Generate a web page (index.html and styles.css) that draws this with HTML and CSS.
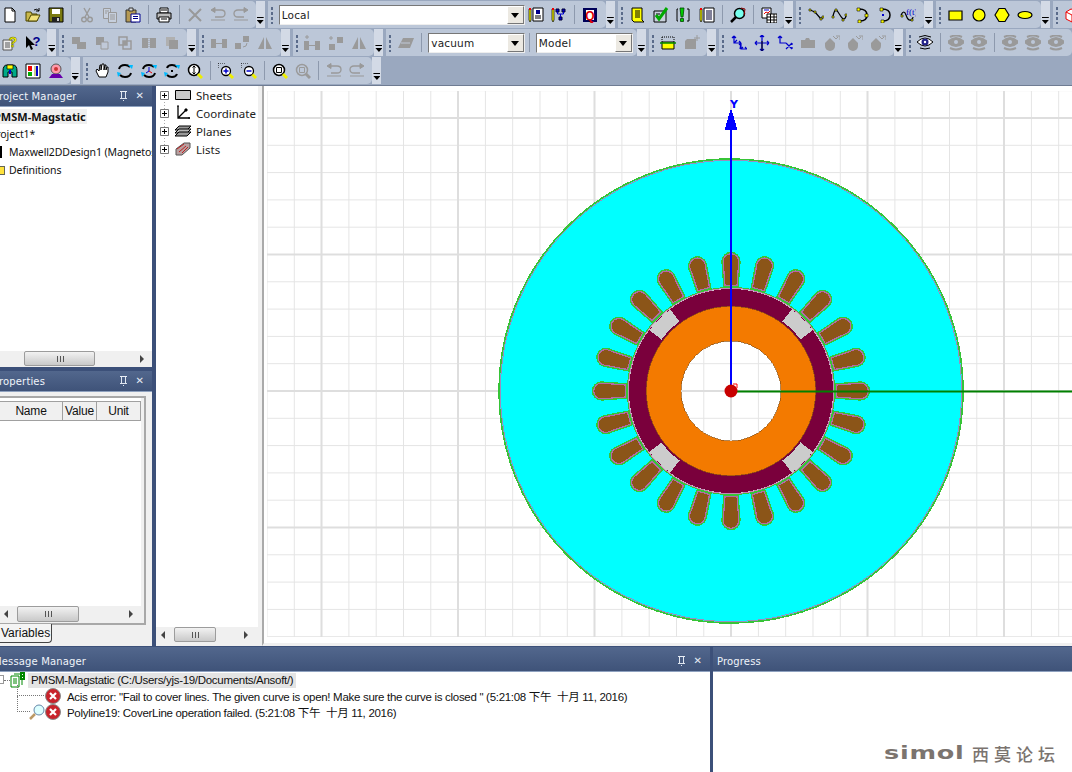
FILE: index.html
```html
<!DOCTYPE html>
<html lang="en">
<head>
<meta charset="utf-8">
<title>Maxwell</title>
<link rel="stylesheet" href="styles.css">
</head>
<body>
<svg class="defs" aria-hidden="true">
<defs>
<symbol id="new" viewBox="0 0 16 16"><path d="M3 1h7l3 3v11H3z" fill="#fff" stroke="#000"/><path d="M10 1v3h3" fill="none" stroke="#000"/></symbol>
<symbol id="open" viewBox="0 0 16 16"><path d="M1 5h5l1 2h5v7H1z" fill="#c9b84a" stroke="#4a4500"/><path d="M3 14l3-6h9l-3 6z" fill="#f2e27a" stroke="#4a4500"/><path d="M9 3q3-2 5 1M14 1v3h-3" fill="none" stroke="#000"/></symbol>
<symbol id="save" viewBox="0 0 16 16"><path d="M1 1h14v14H1z" fill="#7a7a10" stroke="#000"/><path d="M4 2h8v5H4z" fill="#fff"/><path d="M4 10h8v5H4z" fill="#222"/><path d="M9 11h2v3H9z" fill="#ccc"/></symbol>
<symbol id="cut" viewBox="0 0 16 16"><path d="M5 1l5 9M11 1L6 10" stroke="#999" fill="none" stroke-width="1.4"/><circle cx="5" cy="12.5" r="2.3" fill="none" stroke="#999" stroke-width="1.4"/><circle cx="11" cy="12.5" r="2.3" fill="none" stroke="#999" stroke-width="1.4"/></symbol>
<symbol id="copy" viewBox="0 0 16 16"><path d="M1.5 1.5h7v10h-7z" fill="#c6cfdd" stroke="#999"/><path d="M6.5 5.5h8v10h-8z" fill="#c6cfdd" stroke="#999"/><path d="M8 8h5M8 10h5M8 12h5M3 4h4M3 6h2" stroke="#999"/></symbol>
<symbol id="paste" viewBox="0 0 16 16"><path d="M1 3h10v12H1z" fill="#b59a55" stroke="#333"/><path d="M4 1h4v3H4z" fill="#ddd" stroke="#333"/><path d="M6 7h9v8H6z" fill="#fff" stroke="#00008b"/><path d="M8 9.5h5M8 11.5h5" stroke="#00008b"/></symbol>
<symbol id="print" viewBox="0 0 16 16"><path d="M4 1h8v5H4z" fill="#fff" stroke="#000"/><path d="M1 6h14v6H1z" fill="#bbb" stroke="#000"/><path d="M3 10h10v5H3z" fill="#fff" stroke="#000"/><path d="M5 3h6M5 12h6" stroke="#000"/></symbol>
<symbol id="del" viewBox="0 0 16 16"><path d="M2 2l12 12M14 2L2 14" stroke="#999" stroke-width="2"/></symbol>
<symbol id="undo" viewBox="0 0 16 16"><path d="M5 3h6q4 0 4 3.500t-4 3.500H5" fill="none" stroke="#999" stroke-width="1.300"/><path d="M1 3l4-2.500v5z M1 13h14" fill="#999" stroke="#999"/></symbol>
<symbol id="redo" viewBox="0 0 16 16"><path d="M11 3H5Q1 3 1 6.500T5 10h6" fill="none" stroke="#999" stroke-width="1.300"/><path d="M15 3l-4-2.500v5z M1 13h14" fill="#999" stroke="#999"/></symbol>
<symbol id="pdoc" viewBox="0 0 16 16"><path d="M5 1h10v13H5z" fill="#fff" stroke="#000"/><path d="M8 3h4v4H8z" fill="#00008b"/><path d="M7 9h6M7 11h6" stroke="#000"/><path d="M1 2h2v11l-1 2-1-2z" fill="#ff0" stroke="#000" stroke-width=".7"/><path d="M1 1h2v2H1z" fill="#e00"/></symbol>
<symbol id="ptree" viewBox="0 0 16 16"><path d="M1 2h2v11l-1 2-1-2z" fill="#ff0" stroke="#000" stroke-width=".7"/><path d="M1 1h2v2H1z" fill="#e00"/><path d="M5 2h3v3H5zM11 2h3v3h-3zM8 10h3v3H8z" fill="#00c" stroke="#003"/><path d="M6.500 5v2h6V5M9.500 7v3" fill="none" stroke="#00c"/></symbol>
<symbol id="q" viewBox="0 0 16 16"><path d="M1 1h14v14H1z" fill="#000058"/><path d="M4 3h8v10H4z" fill="#fff"/><text x="8" y="12.500" font-size="12" font-weight="700" text-anchor="middle" font-family="Liberation Sans" fill="#d00">Q</text></symbol>
<symbol id="note" viewBox="0 0 16 16"><path d="M3 1h10v12l2 2H5l-2-2z" fill="#ff0" stroke="#000"/><path d="M6 4h5M6 6h5M6 8h5M6 10h5" stroke="#000"/></symbol>
<symbol id="check" viewBox="0 0 16 16"><path d="M1 4h12v11H1z" fill="#c8d0dc" stroke="#000"/><path d="M3 7h4M3 10h4" stroke="#000"/><path d="M3 8l3 4 8-11" fill="none" stroke="#0a0" stroke-width="3"/></symbol>
<symbol id="excl" viewBox="0 0 16 16"><path d="M4 1h4l-1 9H5z" fill="#0c0" stroke="#040" stroke-width=".8"/><path d="M4.500 11.500h3v3h-3z" fill="#0c0" stroke="#040" stroke-width=".8"/><path d="M2 2H1v12h1M11 2h2v12h-2" fill="none" stroke="#000"/></symbol>
<symbol id="pdoc2" viewBox="0 0 16 16"><path d="M5 1h10v14H5z" fill="#fff" stroke="#000"/><path d="M7 4h6M7 6h6M7 8h6M7 10h6M7 12h6" stroke="#003"/><path d="M1 2h2v11l-1 2-1-2z" fill="#ff0" stroke="#000" stroke-width=".7"/><path d="M1 1h2v2H1z" fill="#e00"/></symbol>
<symbol id="mag" viewBox="0 0 16 16"><circle cx="9.500" cy="6.500" r="5" fill="#7fe" stroke="#000" stroke-width="1.500"/><path d="M6 10l-5 5" stroke="#000" stroke-width="2.500"/><path d="M11 1l4 1-1 6" fill="none" stroke="#800"/></symbol>
<symbol id="table" viewBox="0 0 16 16"><path d="M1 1h9v10H1z" fill="#fff" stroke="#000"/><path d="M3 7l2-2 2 1 2-2" fill="none" stroke="#e00"/><path d="M3 3h5" stroke="#00c"/><path d="M6 7h10v9H6z" fill="#fff" stroke="#000"/><path d="M6 10h10M6 13h10M9.500 7v9M13 7v9" stroke="#000"/></symbol>
<symbol id="line" viewBox="0 0 16 16"><path d="M2 3l5 2 6 7 2-2" fill="none" stroke="#000" stroke-width="1.200"/><path d="M1 2h2v2H1zM6 4h2v2H6zM12 11h2v2h-2zM14 9h2v2h-2z" fill="#ff0" stroke="#000" stroke-width=".6"/></symbol>
<symbol id="spline" viewBox="0 0 16 16"><path d="M2 9q2-9 5-4t5 7q3 0 3-4" fill="none" stroke="#000" stroke-width="1.200"/><path d="M1 9h2v2H1zM4 2h2v2H4zM11 12h2v2h-2zM14 7h2v2h-2z" fill="#ff0" stroke="#000" stroke-width=".6"/></symbol>
<symbol id="arc" viewBox="0 0 16 16"><path d="M5 2q8 0 8 6t-7 6" fill="none" stroke="#000" stroke-width="1.500"/><path d="M3 1h3v3H3zM11 7h3v3h-3zM4 13h3v3H4z" fill="#ff0" stroke="#000" stroke-width=".6"/></symbol>
<symbol id="arc2" viewBox="0 0 16 16"><path d="M5 2q8 0 8 6t-7 6" fill="none" stroke="#000" stroke-width="1.500"/><path d="M3 1h3v3H3zM4 13h3v3H4z" fill="#ff0" stroke="#000" stroke-width=".6"/><path d="M5 7h2v2H5z" fill="#00c"/></symbol>
<symbol id="fx" viewBox="0 0 16 16"><path d="M1 8q3-6 5 0t5 5q2-1 2-3" fill="none" stroke="#000" stroke-width="1.200"/><path d="M1 8h2v2H1zM11 12h2v2h-2z" fill="#ff0" stroke="#000" stroke-width=".6"/><text x="6" y="8" font-size="9" fill="#00c" font-family="Liberation Serif">f(t)</text></symbol>
<symbol id="srect" viewBox="0 0 16 16"><path d="M1 4h13v9H1z" fill="#ff0" stroke="#000" stroke-width="1.200"/></symbol>
<symbol id="scirc" viewBox="0 0 16 16"><circle cx="8" cy="8" r="6" fill="#ff0" stroke="#000" stroke-width="1.200"/></symbol>
<symbol id="shex" viewBox="0 0 16 16"><path d="M5 1.500h6l4 6.500-4 6.500H5L1 8z" fill="#ff0" stroke="#000" stroke-width="1.200"/></symbol>
<symbol id="sell" viewBox="0 0 16 16"><ellipse cx="8" cy="8" rx="7" ry="3.500" fill="#ff0" stroke="#000" stroke-width="1.200"/></symbol>
<symbol id="rbox" viewBox="0 0 16 16"><path d="M2 5l5-3 7 2v8l-6 3-6-3z" fill="#fff" stroke="#e00"/><path d="M2 5l6 3 6-4M8 8v7" fill="none" stroke="#e00"/></symbol>
<symbol id="dochelp" viewBox="0 0 16 16"><path d="M1 5h9v10H1z" fill="#eee" stroke="#555"/><path d="M3 8h5M3 10h5M3 12h5" stroke="#555"/><text x="11" y="12" font-size="14" font-weight="700" text-anchor="middle" font-family="Liberation Sans" fill="#ff0" stroke="#660" stroke-width=".5">?</text></symbol>
<symbol id="arrhelp" viewBox="0 0 16 16"><path d="M1 1v12l3-3 2 5 2-1-2-4h4z" fill="#000"/><text x="11.500" y="11" font-size="13" font-weight="700" text-anchor="middle" font-family="Liberation Sans" fill="#00008b">?</text></symbol>
<symbol id="g1" viewBox="0 0 16 16"><path d="M1 2h8v7H1zM6 7h9v7H6z" fill="#9a9a9a"/></symbol>
<symbol id="g2" viewBox="0 0 16 16"><path d="M2 2h8v8H2z" fill="#9a9a9a"/><path d="M7 7h7v7H7z" fill="#c0c9d8" stroke="#9a9a9a"/></symbol>
<symbol id="g3" viewBox="0 0 16 16"><path d="M2 2h8v8H2zM6 6h8v8H6z" fill="none" stroke="#9a9a9a" stroke-width="1.500"/><path d="M6 6h4v4H6z" fill="#9a9a9a"/></symbol>
<symbol id="g4" viewBox="0 0 16 16"><path d="M1 3h6v10H1zM9 3h6v10H9z" fill="#9a9a9a"/><path d="M8 3v10" stroke="#9a9a9a" stroke-dasharray="1 1"/></symbol>
<symbol id="g5" viewBox="0 0 16 16"><path d="M2 2h9v9H2z" fill="#b0b0b0"/><path d="M5 5h9v9H5z" fill="#9a9a9a"/></symbol>
<symbol id="m1" viewBox="0 0 16 16"><path d="M0 4h5v9H0zM11 4h5v9h-5z" fill="#9a9a9a"/><path d="M5 8.500h6" stroke="#9a9a9a"/></symbol>
<symbol id="m2" viewBox="0 0 16 16"><path d="M1 8h6v6H1zM9 1h6v6H9z" fill="#9a9a9a"/><path d="M13 8q0 4-4 4" fill="none" stroke="#9a9a9a"/></symbol>
<symbol id="m3" viewBox="0 0 16 16"><path d="M7 2v12H1zM9 2v12h6z" fill="#9a9a9a"/></symbol>
<symbol id="m4" viewBox="0 0 16 16"><path d="M0 6h5v9H0zM11 6h5v9h-5z" fill="#9a9a9a"/><path d="M5 10.500h6M3 0v4M1 2h4" stroke="#9a9a9a"/></symbol>
<symbol id="m5" viewBox="0 0 16 16"><path d="M1 9h6v6H1zM9 2h6v6H9z" fill="#9a9a9a"/><path d="M3 1v4M1 3h4" stroke="#9a9a9a"/></symbol>
<symbol id="sheetg" viewBox="0 0 16 16"><path d="M5 3h11l-4 10H0z" fill="#9a9a9a"/><path d="M3 8h9" stroke="#c0c9d8"/></symbol>
<symbol id="lay1" viewBox="0 0 16 16"><path d="M2 2h12M2 2v6M14 2v6" stroke="#000" stroke-dasharray="1 1" fill="none"/><path d="M2 7h12v7H2z" fill="#ff0" stroke="#000"/><path d="M0 8h16" stroke="#080" stroke-width="1.500"/></symbol>
<symbol id="lay2" viewBox="0 0 16 16"><path d="M1 6l2-2h9v10H1z" fill="#9a9a9a"/><path d="M13 0v6M10 3h6" stroke="#9a9a9a"/></symbol>
<symbol id="ba1" viewBox="0 0 16 16"><path d="M3 1v7h7M10 8v6h6M3 1L1 3M3 1l2 2M10 8l-2-2M10 8l-2 2M10 14l2-2M16 14l-2-2M10 8l-1 6M3 8l3-3" fill="none" stroke="#00c" stroke-width="1.200"/></symbol>
<symbol id="ba2" viewBox="0 0 16 16"><path d="M8 0v16M1 8h14M8 0L6 2M8 0l2 2M1 8l2-2M1 8l2 2M15 8l-2-2M15 8l-2 2M8 16l-2-2M8 16l2-2" fill="none" stroke="#00c" stroke-width="1.200"/><path d="M8 6v10" stroke="#000"/></symbol>
<symbol id="ba3" viewBox="0 0 16 16"><path d="M3 1v7h6M9 8l6 6M9 14l6-6M3 1L1 3M3 1l2 2M15 8v2M15 14v-2" fill="none" stroke="#00c" stroke-width="1.200"/></symbol>
<symbol id="gbox" viewBox="0 0 16 16"><path d="M1 5h4l1-2h3l1 2h5v8H1z" fill="#9a9a9a"/></symbol>
<symbol id="gdrop" viewBox="0 0 16 16"><path d="M6 3l5 5v3a5 5 0 1 1-10 0V8z" fill="#9a9a9a"/><path d="M9 1l3 3M12 1h4v4M12 4l2-2" fill="none" stroke="#9a9a9a"/></symbol>
<symbol id="eye" viewBox="0 0 16 16"><path d="M0 7q8-8 16 0-8 8-16 0z" fill="#fff" stroke="#000"/><circle cx="8" cy="7" r="3.500" fill="#228"/><circle cx="8" cy="7" r="1.200" fill="#fff"/><path d="M2 2q6-3 12 0M3 13q5 2 10 0" fill="none" stroke="#000"/></symbol>
<symbol id="geye" viewBox="0 0 16 16"><path d="M0 7q8-8 16 0-8 8-16 0z" fill="#9a9a9a" stroke="#9a9a9a" stroke-width="2"/><circle cx="8" cy="7" r="2" fill="#bcc7d8"/><path d="M2 2q6-3 12 0M2 13q6 3 12 0" fill="none" stroke="#9a9a9a" stroke-width="2"/></symbol>
<symbol id="binoc" viewBox="0 0 16 16"><path d="M1 8q0-6 4-6h6q4 0 4 6v6h-5V9H6v5H1z" fill="#0a8" stroke="#000"/><path d="M5 2h6v4H5z" fill="#ff0" stroke="#000" stroke-width=".7"/><path d="M7 7h2v4H7z" fill="#00c"/></symbol>
<symbol id="bars" viewBox="0 0 16 16"><path d="M1 1h14v14H1z" fill="#fff" stroke="#000"/><path d="M3 3h4v5H3z" fill="#e00"/><path d="M3 9h4v4H3z" fill="#0a0"/><path d="M9 3h4v10H9z" fill="#cc8"/><path d="M11 3h2v10h-2z" fill="#00c"/></symbol>
<symbol id="target" viewBox="0 0 16 16"><circle cx="8" cy="6" r="5" fill="#f9a" stroke="#555"/><circle cx="8" cy="6" r="2" fill="#c33"/><path d="M1 15l3-4h8l3 4z" fill="#60a"/></symbol>
<symbol id="hand" viewBox="0 0 16 16"><path d="M2 8l3 6h7l2-5V4l-1 0-1 3V2h-1l-1 5V1H8L7 7V2H6L5 8 3 6z" fill="#fff" stroke="#000"/></symbol>
<symbol id="rot" viewBox="0 0 16 16"><path d="M2 6q1-4 6-4 3 0 5 2M14 10q-1 4-6 4-3 0-5-2" fill="none" stroke="#000" stroke-width="2"/><path d="M11 2l5 0-1 4zM0 9l4 1-3 4z" fill="#0bf"/></symbol>
<symbol id="rotx" viewBox="0 0 16 16"><path d="M2 6q1-4 6-4 3 0 5 2M14 10q-1 4-6 4-3 0-5-2" fill="none" stroke="#000" stroke-width="2"/><path d="M11 2l5 0-1 4zM0 9l4 1-3 4z" fill="#0bf"/><path d="M8 8V4M8 8l-3 2" stroke="#00c"/><path d="M8 8l3 2" stroke="#e00"/></symbol>
<symbol id="rotz" viewBox="0 0 16 16"><path d="M3 5q1-3 5-3 3 0 5 2M13 11q-1 3-5 3-3 0-5-2" fill="none" stroke="#000" stroke-width="2"/><path d="M11 2l5 0-1 4zM0 9l4 1-3 4z" fill="#0bf"/><path d="M7 7h2v2H7z" fill="#000"/></symbol>
<symbol id="zfit" viewBox="0 0 16 16"><circle cx="7" cy="7" r="5.500" fill="#fff" stroke="#000" stroke-width="1.500"/><path d="M7 3v8M5.500 4.500L7 3l1.500 1.500M5.500 9.500L7 11l1.500-1.500" fill="none" stroke="#000"/><path d="M11 11l4 4" stroke="#ee0" stroke-width="3"/></symbol>
<symbol id="zin" viewBox="0 0 16 16"><path d="M0 0h8M0 0v6" stroke="#000" stroke-dasharray="1 1" fill="none"/><circle cx="8" cy="8" r="4.500" fill="#fff" stroke="#000" stroke-width="1.300"/><path d="M5.500 8h5M8 5.500v5" stroke="#00c" stroke-width="1.500"/><path d="M11.500 11.500l3.500 3.500" stroke="#ee0" stroke-width="3"/></symbol>
<symbol id="zout" viewBox="0 0 16 16"><path d="M0 0h8M0 0v6" stroke="#000" stroke-dasharray="1 1" fill="none"/><circle cx="8" cy="8" r="4.500" fill="#fff" stroke="#000" stroke-width="1.300"/><path d="M5.500 8h5" stroke="#00c" stroke-width="1.500"/><path d="M11.500 11.500l3.500 3.500" stroke="#ee0" stroke-width="3"/></symbol>
<symbol id="zbox" viewBox="0 0 16 16"><circle cx="7" cy="7" r="5.500" fill="#fff" stroke="#000" stroke-width="1.500"/><path d="M4.500 4.500h5v5h-5z" fill="none" stroke="#000"/><path d="M11 11l4 4" stroke="#ee0" stroke-width="3"/></symbol>
<symbol id="zgrey" viewBox="0 0 16 16"><circle cx="7" cy="7" r="5.500" fill="none" stroke="#9a9a9a" stroke-width="1.500"/><path d="M4.500 4.500h5v5h-5z" fill="none" stroke="#9a9a9a"/><path d="M11 11l4 4" stroke="#9a9a9a" stroke-width="3"/></symbol>
<symbol id="err" viewBox="0 0 16 16"><circle cx="8" cy="8" r="7.500" fill="#c8242c" stroke="#8a8a8a"/><path d="M5 5l6 6M11 5l-6 6" stroke="#fff" stroke-width="2.200"/></symbol>
<symbol id="plus" viewBox="0 0 9 9"><path d="M.5.500h8v8h-8z" fill="#fff" stroke="#777"/><path d="M2 4.500h5M4.500 2v5" stroke="#000"/></symbol>
</defs>
</svg>

<div class="app">
<header class="bars">
  <div class="row">
    <div class="tb first"><div class="pill">
      <svg class="ic"><use href="#new"/></svg><svg class="ic"><use href="#open"/></svg><svg class="ic"><use href="#save"/></svg><i class="sep"></i>
      <svg class="ic"><use href="#cut"/></svg><svg class="ic"><use href="#copy"/></svg><svg class="ic"><use href="#paste"/></svg><i class="sep"></i>
      <svg class="ic"><use href="#print"/></svg><i class="sep"></i>
      <svg class="ic"><use href="#del"/></svg><svg class="ic"><use href="#undo"/></svg><svg class="ic"><use href="#redo"/></svg>
    </div><div class="chev"></div></div>
    <div class="tb"><div class="pill"><i class="grip"></i>
      <div class="combo wide"><span>Local</span><b></b></div>
      <svg class="ic"><use href="#pdoc"/></svg><svg class="ic"><use href="#ptree"/></svg><i class="sep"></i><svg class="ic"><use href="#q"/></svg>
    </div><div class="chev"></div></div>
    <div class="tb"><div class="pill"><i class="grip"></i>
      <svg class="ic"><use href="#note"/></svg><svg class="ic"><use href="#check"/></svg><svg class="ic"><use href="#excl"/></svg><svg class="ic"><use href="#pdoc2"/></svg><i class="sep"></i>
      <svg class="ic"><use href="#mag"/></svg><i class="sep"></i><svg class="ic"><use href="#table"/></svg>
    </div><div class="chev"></div></div>
    <div class="tb"><div class="pill"><i class="grip"></i>
      <svg class="ic"><use href="#line"/></svg><svg class="ic"><use href="#spline"/></svg><svg class="ic"><use href="#arc"/></svg><svg class="ic"><use href="#arc2"/></svg><svg class="ic"><use href="#fx"/></svg>
    </div><div class="chev"></div></div>
    <div class="tb"><div class="pill"><i class="grip"></i>
      <svg class="ic"><use href="#srect"/></svg><svg class="ic"><use href="#scirc"/></svg><svg class="ic"><use href="#shex"/></svg><svg class="ic"><use href="#sell"/></svg>
    </div><div class="chev"></div></div>
    <div class="tb"><div class="pill"><i class="grip"></i><svg class="ic"><use href="#rbox"/></svg></div></div>
  </div>
  <div class="row">
    <div class="tb first"><div class="pill">
      <svg class="ic"><use href="#dochelp"/></svg><svg class="ic"><use href="#arrhelp"/></svg>
    </div><div class="chev"></div></div>
    <div class="tb"><div class="pill"><i class="grip"></i>
      <svg class="ic"><use href="#g1"/></svg><svg class="ic"><use href="#g2"/></svg><svg class="ic"><use href="#g3"/></svg><svg class="ic"><use href="#g4"/></svg><svg class="ic"><use href="#g5"/></svg>
    </div><div class="chev"></div></div>
    <div class="tb"><div class="pill"><i class="grip"></i>
      <svg class="ic"><use href="#m1"/></svg><svg class="ic"><use href="#m2"/></svg><svg class="ic"><use href="#m3"/></svg>
    </div><div class="chev"></div></div>
    <div class="tb"><div class="pill"><i class="grip"></i>
      <svg class="ic"><use href="#m4"/></svg><svg class="ic"><use href="#m5"/></svg><svg class="ic"><use href="#m3"/></svg>
    </div><div class="chev"></div></div>
    <div class="tb"><div class="pill"><i class="grip"></i>
      <svg class="ic"><use href="#sheetg"/></svg><i class="sep"></i>
      <div class="combo"><span>vacuum</span><b></b></div><i class="sep"></i>
      <div class="combo"><span>Model</span><b></b></div>
    </div><div class="chev"></div></div>
    <div class="tb"><div class="pill"><i class="grip"></i>
      <svg class="ic"><use href="#lay1"/></svg><svg class="ic"><use href="#lay2"/></svg>
    </div><div class="chev"></div></div>
    <div class="tb"><div class="pill"><i class="grip"></i>
      <svg class="ic"><use href="#ba1"/></svg><svg class="ic"><use href="#ba2"/></svg><svg class="ic"><use href="#ba3"/></svg><svg class="ic"><use href="#gbox"/></svg><svg class="ic"><use href="#gdrop"/></svg><svg class="ic"><use href="#gdrop"/></svg><svg class="ic"><use href="#gdrop"/></svg>
    </div><div class="chev"></div></div>
    <div class="tb"><div class="pill"><i class="grip"></i>
      <svg class="ic"><use href="#eye"/></svg><i class="sep"></i><svg class="ic"><use href="#geye"/></svg><svg class="ic"><use href="#geye"/></svg><i class="sep"></i><svg class="ic"><use href="#geye"/></svg><svg class="ic"><use href="#geye"/></svg><svg class="ic"><use href="#geye"/></svg>
    </div></div>
  </div>
  <div class="row">
    <div class="tb first"><div class="pill">
      <svg class="ic"><use href="#binoc"/></svg><svg class="ic"><use href="#bars"/></svg><svg class="ic"><use href="#target"/></svg>
    </div><div class="chev"></div></div>
    <div class="tb"><div class="pill"><i class="grip"></i>
      <svg class="ic"><use href="#hand"/></svg><svg class="ic"><use href="#rot"/></svg><svg class="ic"><use href="#rotx"/></svg><svg class="ic"><use href="#rotz"/></svg><svg class="ic"><use href="#zfit"/></svg><i class="sep"></i>
      <svg class="ic"><use href="#zin"/></svg><svg class="ic"><use href="#zout"/></svg><i class="sep"></i>
      <svg class="ic"><use href="#zbox"/></svg><svg class="ic"><use href="#zgrey"/></svg><i class="sep"></i>
      <svg class="ic"><use href="#undo"/></svg><svg class="ic"><use href="#redo"/></svg>
    </div><div class="chev"></div></div>
  </div>
</header>

<main class="work">
  <aside class="left">
    <section class="pm">
      <h2 class="title"><span class="clip">Project Manager</span><span class="ctl"><i class="pin"></i><i class="x">✕</i></span></h2>
      <div class="pm-body">
        <div class="pm-row bold"><span class="hl">PMSM-Magstatic</span></div>
        <div class="pm-row"><span class="cut2">Project1*</span></div>
        <div class="pm-row ind"><i class="bracket"></i>Maxwell2DDesign1 (Magnetostatic)</div>
        <div class="pm-row ind"><i class="folder"></i>Definitions</div>
      </div>
      <div class="hscroll pmscroll"><i class="thumb"></i><i class="ar r"></i></div>
    </section>
    <section class="props">
      <h2 class="title"><span class="clip">Properties</span><span class="ctl"><i class="pin"></i><i class="x">✕</i></span></h2>
      <div class="props-body">
        <div class="props-box">
          <div class="thead"><span class="c0">Name</span><span class="c1">Value</span><span class="c2">Unit</span></div>
          <div class="tbody"></div>
          <div class="hscroll propscroll"><i class="ar l"></i><i class="thumb"></i><i class="ar r"></i></div>
        </div>
        <div class="tab">Variables</div>
      </div>
    </section>
  </aside>
  <nav class="tree">
    <div class="tree-body">
      <div class="node"><svg class="pl"><use href="#plus"/></svg><svg class="ti" viewBox="0 0 16 16"><path d="M.5 3.500h15v9H.5z" fill="#c8c8c8" stroke="#000"/></svg>Sheets</div>
      <div class="node"><svg class="pl"><use href="#plus"/></svg><svg class="ti" viewBox="0 0 16 16"><path d="M3 1v12h12M3 13l8-8" fill="none" stroke="#000" stroke-width="1.300"/><path d="M2 1h2M14 12v2M10 4h2v2h-2z" stroke="#000"/></svg>Coordinate</div>
      <div class="node"><svg class="pl"><use href="#plus"/></svg><svg class="ti" viewBox="0 0 16 16"><path d="M4 3h12l-4 4H0z" fill="#999" stroke="#000"/><path d="M4 6h12l-4 4H0z" fill="#bbb" stroke="#000"/><path d="M4 9h12l-4 4H0z" fill="#999" stroke="#000"/></svg>Planes</div>
      <div class="node"><svg class="pl"><use href="#plus"/></svg><svg class="ti" viewBox="0 0 16 16"><path d="M1 8l8-6h6v5l-8 7H1z" fill="#b9a0a0" stroke="#555"/><path d="M2 8l7-5M4 11l7-6M7 12l6-6" stroke="#b22"/></svg>Lists</div>
    </div>
    <div class="hscroll treescroll"><i class="ar l"></i><i class="thumb"></i><i class="ar r"></i></div>
  </nav>
  <div class="canvas">
    <svg class="view" viewBox="264 86 808 557" aria-label="Motor cross-section">
      <defs>
        <pattern id="minor" x="266.500" y="90.200" width="27.300" height="27.300" patternUnits="userSpaceOnUse"><path d="M.5 0v27.300M0 .5h27.300" stroke="#e4e4e4" fill="none"/></pattern>
        <pattern id="major" x="320.500" y="117" width="136.500" height="136.500" patternUnits="userSpaceOnUse"><path d="M1 0v136.500M0 1h136.500" stroke="#dedede" stroke-width="2" fill="none"/></pattern>
        <clipPath id="hole"><circle cx="731" cy="391" r="50"/></clipPath>
        <g id="slot">
          <path d="M-3-101h6v6h-6z" fill="#ccc" stroke="#c070b0" stroke-width=".6"/>
          <path d="M-6-105.500l-1.800-24a7.800 7.800 0 0 1 15.600 0L6-105.500z" fill="#8b5518" stroke="#37c437" stroke-width="3.800"/>
          <path d="M-6-105.500l-1.800-24a7.800 7.800 0 0 1 15.600 0L6-105.500z" fill="#8b5518" stroke="#b468a8" stroke-width="1.200"/>
        </g>
      </defs>
      <rect x="267" y="91" width="805" height="546" fill="url(#minor)"/>
      <rect x="267" y="91" width="805" height="546" fill="url(#major)"/>
      <g shape-rendering="crispEdges" transform="translate(731 391)">
        <circle r="232" fill="#00ffff" stroke="#37c437" stroke-width="1.600"/>
        <circle r="230.800" fill="none" stroke="#c070b0" stroke-width=".8"/>
        <use href="#slot"/><use href="#slot" transform="rotate(15)"/><use href="#slot" transform="rotate(30)"/><use href="#slot" transform="rotate(45)"/><use href="#slot" transform="rotate(60)"/><use href="#slot" transform="rotate(75)"/>
        <use href="#slot" transform="rotate(90)"/><use href="#slot" transform="rotate(105)"/><use href="#slot" transform="rotate(120)"/><use href="#slot" transform="rotate(135)"/><use href="#slot" transform="rotate(150)"/><use href="#slot" transform="rotate(165)"/>
        <use href="#slot" transform="rotate(180)"/><use href="#slot" transform="rotate(195)"/><use href="#slot" transform="rotate(210)"/><use href="#slot" transform="rotate(225)"/><use href="#slot" transform="rotate(240)"/><use href="#slot" transform="rotate(255)"/>
        <use href="#slot" transform="rotate(270)"/><use href="#slot" transform="rotate(285)"/><use href="#slot" transform="rotate(300)"/><use href="#slot" transform="rotate(315)"/><use href="#slot" transform="rotate(330)"/><use href="#slot" transform="rotate(345)"/>
        <circle r="103.600" fill="#ccc" stroke="#37c437" stroke-width="1"/>
        <circle r="102.800" fill="#ccc" stroke="#c070b0" stroke-width=".8"/>
        <circle r="102" fill="#7a003c"/>
        <path d="M60.800-81.600A102 102 0 0 1 81.600-60.800L69.500-51.500A86.500 86.500 0 0 0 51.400-69.500z" fill="#ccc" id="gap"/>
        <use href="#gap" transform="rotate(90)"/><use href="#gap" transform="rotate(180)"/><use href="#gap" transform="rotate(270)"/>
        <circle r="84.700" fill="#f37a00" stroke="#8b5010" stroke-width=".7"/>
        <circle r="50" fill="#fff" stroke="#8b5010" stroke-width=".7"/>
      </g>
      <g clip-path="url(#hole)">
        <rect x="681" y="341" width="100" height="100" fill="url(#minor)"/>
        <rect x="681" y="341" width="100" height="100" fill="url(#major)"/>
      </g>
      <path d="M731 391V125" stroke="#0000ff" stroke-width="2"/>
      <path d="M731 108l6.500 22h-13z" fill="#0000ff" shape-rendering="crispEdges"/>
      <path d="M731 391.500H1072" stroke="#008000" stroke-width="2"/>
      <circle cx="731" cy="391" r="6.500" fill="#c80000"/>
      <path d="M733 384h4v4" fill="none" stroke="#ff0000"/>
      <text class="ylab" x="734" y="108">Y</text>
    </svg>
  </div>
</main>

<footer class="bottom">
  <section class="msg">
    <h2 class="title"><span class="clip">Message Manager</span><span class="ctl"><i class="pin"></i><i class="x">✕</i></span></h2>
    <div class="msg-body">
      <div class="mrow top"><i class="mbox"></i><i class="dots"></i><svg class="prj" viewBox="0 0 16 16"><path d="M1 4h8v11H1zM4 2h8v11" fill="#fff" stroke="#080"/><path d="M10 0h5v8h-5z" fill="#080"/><path d="M12 2h1v1h-1zM12 5h1v1h-1z" fill="#fff"/><path d="M3 7h4M3 9h4M3 11h4" stroke="#080"/></svg><span class="mhl">PMSM-Magstatic (C:/Users/yjs-19/Documents/Ansoft/)</span></div>
      <div class="mrow"><i class="lead"></i><svg class="eic"><use href="#err"/></svg><span>Acis error: "Fail to cover lines. The given curve is open! Make sure the curve is closed " (5:21:08 下午&nbsp; 十月 11, 2016)</span></div>
      <div class="mrow"><i class="lead short"></i><svg class="mgl" viewBox="0 0 16 16"><circle cx="10" cy="6" r="5" fill="#dff" stroke="#68a"/><path d="M6 10l-5 5" stroke="#b96" stroke-width="2.500"/></svg><svg class="eic"><use href="#err"/></svg><span>Polyline19: CoverLine operation failed. (5:21:08 下午&nbsp; 十月 11, 2016)</span></div>
    </div>
  </section>
  <section class="prog">
    <h2 class="title"><span>Progress</span></h2>
    <div class="prog-body"></div>
  </section>
  <div class="mark"><span class="simol">simol</span><span class="cn">西莫论坛</span></div>
</footer>
</div>
</body>
</html>
```

FILE: styles.css
```css
* { box-sizing: border-box; }
html, body { margin: 0; padding: 0; }
body { width: 1072px; height: 772px; overflow: hidden; background: #fff; font-family: "DejaVu Sans", sans-serif; }
.defs { position: absolute; width: 0; height: 0; }
.app { width: 1072px; height: 772px; display: flex; flex-direction: column; overflow: hidden; }

.bars { height: 86px; flex: none; background: #9aa8bf; border-bottom: 1px solid #6f7c93; padding-top: 1px; }
.row { height: 28px; display: flex; align-items: stretch; margin-left: -2px; white-space: nowrap; }
.tb { display: flex; flex: none; height: 27px; border-left: 3px solid #9aa8bf; }
.tb.first { border-left: 0; }
.pill { display: flex; align-items: center; background: #bcc7d8; border-radius: 0 5px 5px 0; padding-right: 4px; }
.first .pill { padding-right: 3px; }
.chev { width: 9px; background: #d3dae6; position: relative; }
.chev::after { content: ""; position: absolute; left: 1px; bottom: 4px; width: 7px; height: 7px; background: #000; clip-path: polygon(0 0, 100% 0, 100% 1px, 0 1px, 0 3px, 100% 3px, 50% 100%, 0 3px); }
.ic { width: 16px; height: 16px; margin: 0 3.6px; flex: none; overflow: visible; }
.sep { width: 7.600px; height: 19px; flex: none; background: linear-gradient(#8d99ad, #8d99ad) center / 1px 100% no-repeat; }
.grip { width: 8px; height: 18px; flex: none; background: radial-gradient(circle, #5a6b8a 1.2px, transparent 1.4px) 0 0 / 8px 5px repeat-y; }

.combo { width: 97px; height: 20px; flex: none; margin-left: 3px; background: #fff; border: 1px solid #777; border-color: #777 #eee #eee #777; display: flex; align-items: center; justify-content: space-between; font-size: 10.5px; color: #222; padding-left: 2px; letter-spacing: .2px; }
.combo.wide { width: 246px; }
.combo b { width: 17px; height: 18px; background: #ece9e2; border: 1px solid #888; border-color: #fff #777 #777 #fff; position: relative; }
.combo b::after { content: ""; position: absolute; left: 3px; top: 6px; border: 4px solid transparent; border-top: 5px solid #000; border-bottom: 0; }

.work { height: 560px; flex: none; display: flex; background: #3c5079; }
.left { width: 152px; flex: none; display: flex; flex-direction: column; gap: 4px; }
.title { height: 21px; margin: 0; flex: none; display: flex; align-items: center; justify-content: space-between; background: linear-gradient(#52678d, #3f5379); border-bottom: 1px solid #8ea1bf; color: #f0f4fa; font-weight: 400; font-size: 10px; letter-spacing: .15px; white-space: nowrap; overflow: hidden; }
.clip { margin-left: -7px; }
.ctl { display: flex; align-items: center; gap: 8px; padding-right: 8px; }
.pin { width: 7px; height: 10px; border-top: 1px solid #e8eef6; background: linear-gradient(#dfe6f0, #dfe6f0) center 8px / 1px 2px no-repeat, linear-gradient(#dfe6f0, #dfe6f0) 0 6px / 7px 1px no-repeat, linear-gradient(90deg, #dfe6f0 1px, transparent 1px, transparent 4px, #dfe6f0 4px, #dfe6f0 5px, transparent 5px) 1px 0 / 6px 6px no-repeat; }
.x { font-style: normal; font-size: 10px; color: #e4eaf4; line-height: 1; }

.pm { height: 281px; flex: none; display: flex; flex-direction: column; background: #fff; }
.pm-body { flex: 1; overflow: hidden; color: #111; }
.pm-row { height: 18px; display: flex; align-items: center; white-space: nowrap; font-family: "Noto Sans", sans-serif; font-size: 10.5px; letter-spacing: -.1px; }
.pm-row.bold { font-weight: 700; font-size: 11px; letter-spacing: 0; }
.hl { background: #f0f0f0; margin-left: -6px; padding: 0 1px 0 0; }
.cut2 { margin-left: -10px; }
.pm-row.ind { padding-left: 9px; position: relative; }
.bracket { position: absolute; left: 0; top: 3px; width: 2px; height: 12px; background: #000; }
.folder { position: absolute; left: 0; top: 5px; width: 5px; height: 9px; background: #ffe23c; border: 1px solid #665; border-left: 0; }

.hscroll { height: 16px; flex: none; background: #f0f0f0; position: relative; }
.thumb { position: absolute; top: 0; height: 15px; background: linear-gradient(#f2f2f2, #c9c9c9); border: 1px solid #9c9c9c; border-radius: 2px; }
.thumb::after { content: ""; position: absolute; left: 50%; top: 4px; width: 7px; height: 6px; margin-left: -3px; background: repeating-linear-gradient(90deg, #555 0 1px, transparent 1px 3px); }
.ar { position: absolute; top: 4px; border: 4px solid transparent; }
.ar.r { border-left: 4px solid #444; border-right: 0; }
.ar.l { border-right: 4px solid #444; border-left: 0; }
.pmscroll .thumb { left: 24px; width: 71px; }
.pmscroll .ar.r { left: 140px; }

.props { flex: 1; display: flex; flex-direction: column; background: #f0f0f0; }
.props-body { flex: 1; display: flex; flex-direction: column; }
.props-box { height: 229px; width: 146px; flex: none; border-right: 2px solid #a8a8a8; border-bottom: 2px solid #a8a8a8; border-top: 2px solid #a8a8a8; margin-top: 4px; background: #fff; display: flex; flex-direction: column; box-shadow: inset -3px 0 0 #f0f0f0; padding-top: 3px; }
.thead { height: 20px; width: 141px; flex: none; display: flex; font-family: "Liberation Sans", sans-serif; background: #f0f0f0; border-top: 1px solid #a0a0a0; border-bottom: 1px solid #a0a0a0; border-right: 1px solid #a0a0a0; color: #111; font-size: 12px; }
.thead span { display: flex; align-items: center; justify-content: center; border-right: 1px solid #a0a0a0; flex: none; letter-spacing: -.2px; }
.c0 { width: 63px; }
.c1 { width: 34px; }
.c2 { flex: 1 !important; border-right: 0 !important; }
.tbody { flex: 1; }
.propscroll { height: 17px; margin-right: 3px; }
.propscroll .thumb { left: 17px; width: 62px; height: 16px; }
.propscroll .ar.l { left: 4px; }
.propscroll .ar.r { left: 129px; }
.tab { width: 52px; height: 19px; background: #f4f4f4; border-right: 1px solid #444; border-bottom: 1px solid #444; border-radius: 0 0 4px 0; font-family: "Liberation Sans", sans-serif; font-size: 12px; padding-left: 1px; margin-top: -1px; line-height: 18px; color: #111; }

.tree { width: 106px; flex: none; margin-left: 4px; background: #f0f0f0; display: flex; flex-direction: column; padding: 0 4px 3px 0; height: 560px; }
.tree-body { flex: 1; background: #fff; background-image: repeating-linear-gradient(#aaa 0 1px, transparent 1px 3px); background-size: 1px 58px; background-position: 8px 13px; background-repeat: no-repeat; }
.node { height: 18px; display: flex; align-items: center; font-family: "Noto Sans", sans-serif; font-size: 11.5px; color: #222; white-space: nowrap; padding-left: 4px; }
.pl { width: 9px; height: 9px; flex: none; margin-right: 6px; }
.ti { width: 16px; height: 16px; flex: none; margin-right: 5px; }
.treescroll { width: 102px; background: #f0f0f0; }
.treescroll .thumb { left: 18px; width: 42px; }
.treescroll .ar.l { left: 5px; }
.treescroll .ar.r { left: 88px; }

.canvas { flex: 1; min-width: 0; background: #fff; border-left: 2px solid #aaa; border-bottom: 3px solid #f0f0f0; }
.view { display: block; width: 808px; height: 557px; }
.ylab { font: 700 11px "DejaVu Sans", sans-serif; fill: #0000ff; text-anchor: middle; }

.bottom { flex: 1; display: flex; position: relative; background: #3c5079; padding-top: 1px; }
.msg { width: 710px; flex: none; display: flex; flex-direction: column; }
.prog { flex: 1; margin-left: 3px; display: flex; flex-direction: column; }
.msg .title, .prog .title { height: 25px; padding-top: 4px; }
.prog .title { padding-left: 4px; }
.msg-body, .prog-body { flex: 1; background: #fff; }
.msg-body { font-family: "Liberation Sans", "Noto Sans CJK SC", sans-serif; font-size: 11.5px; letter-spacing: -.3px; color: #111; }
.mrow { height: 16px; display: flex; align-items: center; white-space: nowrap; position: relative; }
.mrow span { position: absolute; left: 67px; }
.mrow.top span { left: 28px; top: 1px; padding: 0 3px; background: #e4e4e4; line-height: 15px; }
.mbox { position: absolute; left: -5px; top: 3px; width: 9px; height: 9px; border: 1px solid #999; }
.dots { position: absolute; left: 4px; top: 8px; width: 6px; border-top: 1px dotted #777; }
.prj { position: absolute; left: 10px; top: 0; width: 16px; height: 16px; }
.lead { position: absolute; left: 17px; top: -3px; width: 27px; height: 11px; border-left: 1px dotted #777; border-bottom: 1px dotted #777; }
.lead.short { top: -8px; width: 13px; height: 16px; }
.eic { position: absolute; left: 45px; top: 0; width: 16px; height: 16px; }
.mgl { position: absolute; left: 29px; top: 0; width: 16px; height: 16px; }
.mark { position: absolute; left: 884px; top: 97px; height: 20px; display: flex; align-items: center; color: #7b746f; }
.simol { font-family: "DejaVu Sans", sans-serif; font-weight: 700; font-size: 17px; width: 88px; transform: scaleX(1.5); transform-origin: left center; letter-spacing: .5px; }
.cn { font-family: "Noto Sans CJK SC", sans-serif; font-size: 17px; letter-spacing: 5px; font-weight: 500; }
```
